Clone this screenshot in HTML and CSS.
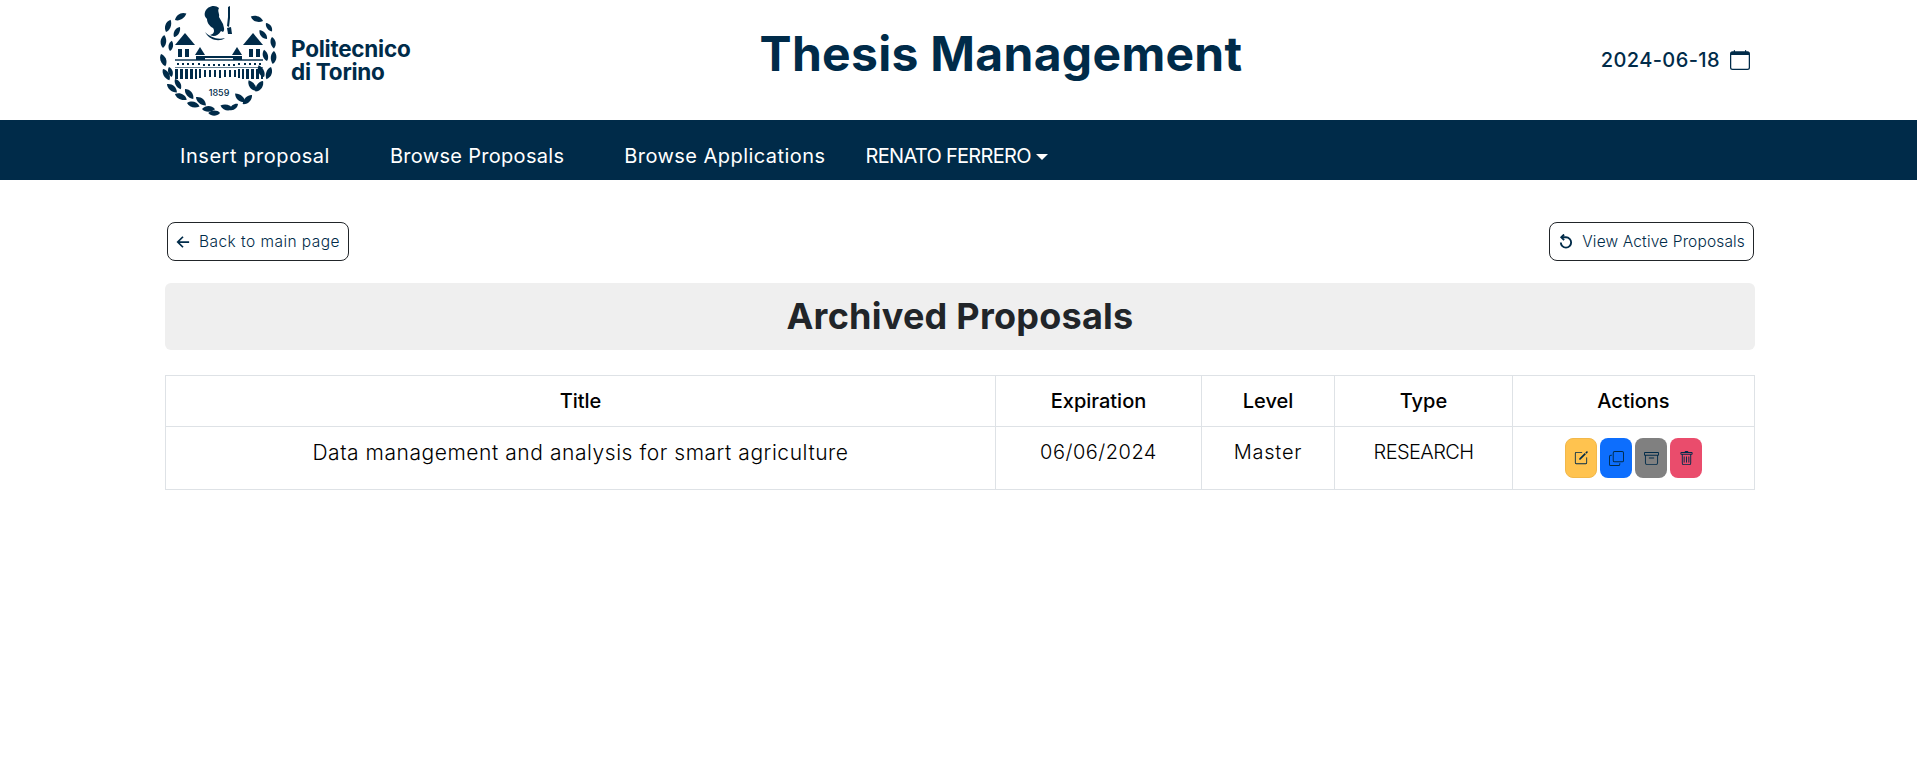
FILE: index.html
```html
<!DOCTYPE html>
<html lang="en">
<head>
    <meta charset="UTF-8">
    <meta name="viewport" content="width=device-width, initial-scale=1">
    <title>Thesis Management</title>
    <link rel="stylesheet" href="styles.css">
</head>
<body>

<header class="top">
    <div class="logo">
        <svg class="crest" width="118" height="116" viewBox="0 0 118 116" fill="#002b49">
            <defs>
                <path id="leaf" d="M0 0C3-4 9-5 13-1C9 3 3 3 0 0Z"/>
            </defs>
            <!-- laurel, left side -->
            <use href="#leaf" transform="translate(15 19) rotate(-25)"/>
            <use href="#leaf" transform="translate(6 31) rotate(-65)"/>
            <use href="#leaf" transform="translate(14 36) rotate(-55) scale(.9)"/>
            <use href="#leaf" transform="translate(3 47) rotate(-80)"/>
            <use href="#leaf" transform="translate(10 50) rotate(-75) scale(.8)"/>
            <use href="#leaf" transform="translate(1 53) rotate(75)"/>
            <use href="#leaf" transform="translate(3 68) rotate(65)"/>
            <use href="#leaf" transform="translate(9 66) rotate(80) scale(.8)"/>
            <use href="#leaf" transform="translate(7 83) rotate(45)"/>
            <use href="#leaf" transform="translate(15 78) rotate(65) scale(.9)"/>
            <use href="#leaf" transform="translate(15 93) rotate(30)"/>
            <use href="#leaf" transform="translate(25 88) rotate(55)"/>
            <use href="#leaf" transform="translate(27 102) rotate(20)"/>
            <use href="#leaf" transform="translate(36 96) rotate(45)"/>
            <use href="#leaf" transform="translate(42 108) rotate(5)"/>
            <!-- laurel, right side -->
            <use href="#leaf" transform="translate(103 20) rotate(205)"/>
            <use href="#leaf" transform="translate(106 22) rotate(60) scale(.8)"/>
            <use href="#leaf" transform="translate(107 38) rotate(235) scale(.9)"/>
            <use href="#leaf" transform="translate(112 36) rotate(85) scale(.9)"/>
            <use href="#leaf" transform="translate(107 60) rotate(260) scale(.9)"/>
            <use href="#leaf" transform="translate(114 50) rotate(100)"/>
            <use href="#leaf" transform="translate(104 76) rotate(250)"/>
            <use href="#leaf" transform="translate(111 66) rotate(115)"/>
            <use href="#leaf" transform="translate(96 90) rotate(240)"/>
            <use href="#leaf" transform="translate(103 80) rotate(130)"/>
            <use href="#leaf" transform="translate(85 101) rotate(225)"/>
            <use href="#leaf" transform="translate(92 94) rotate(140)"/>
            <use href="#leaf" transform="translate(73 108) rotate(200)"/>
            <use href="#leaf" transform="translate(78 103) rotate(150) scale(.8)"/>
            <use href="#leaf" transform="translate(60 112) rotate(185) scale(.9)"/>
            <!-- head -->
            <path d="M45 11C47 5 55 3 59 7C57 10 60 13 59 16L63 23C64 27 65 29 63 31L61 30C58 35 54 36 50 34C54 33 55 30 53 27C49 25 47 21 47 18C45 16 44 14 45 11Z"/>
            <path d="M45 31C50 36 57 39 65 37C60 41 50 40 45 31Z"/>
            <path d="M68 6L70 5L70 17L69 26L67 25L68 16Z"/>
            <path d="M67 27L71 26L72 33L68 33Z"/>
            <!-- building -->
            <path d="M25 32L35 44H15Z"/>
            <path d="M93 32L103 44H83Z"/>
            <path d="M40 46L45 54H35Z"/>
            <path d="M77 46L82 54H72Z"/>
            <path d="M18 48h4v8h-4zM25 48h4v8h-4zM89 48h4v8h-4zM96 48h4v8h-4z"/>
            <path d="M36 55h9v4h-9zM73 55h9v4h-9z"/>
            <path d="M45 55H73V57H45Z"/>
            <path d="M15 58H103V60H15Z" opacity=".7"/>
            <path d="M17 62h2v2h-2zM22 62h2v2h-2zM27 62h2v2h-2zM32 62h2v2h-2zM38 62h2v2h-2zM43 63h2v2h-2zM48 63h2v2h-2zM53 63h2v2h-2zM58 63h2v2h-2zM63 63h2v2h-2zM68 63h2v2h-2zM73 63h2v2h-2zM78 62h2v2h-2zM84 62h2v2h-2zM89 62h2v2h-2zM94 62h2v2h-2zM99 62h2v2h-2z"/>
            <path d="M15 66H103V67H15Z" opacity=".6"/>
            <path d="M15 68h3v10h-3zM20 68h3v10h-3zM25 68h3v10h-3zM30 68h3v10h-3zM35 68h2v10h-2zM39 68h2v9h-2zM44 69h2v7h-2zM49 69h2v7h-2zM54 69h2v7h-2zM59 69h2v8h-2zM64 69h2v7h-2zM69 69h2v7h-2zM74 69h2v7h-2zM78 68h2v9h-2zM82 68h2v10h-2zM86 68h3v10h-3zM91 68h3v10h-3zM96 68h3v10h-3zM101 68h2v10h-2z"/>
            <text class="crest-year" x="59" y="95" text-anchor="middle">1859</text>
        </svg>
        <div class="wordmark">Politecnico<br>di Torino</div>
    </div>
    <h1 class="app-title">Thesis Management</h1>
    <div class="today">
        <span>2024-06-18</span>
        <svg width="20" height="20" viewBox="0 0 16 16" fill="#002b49">
            <path d="M3.500 0a.5.5 0 0 1 .5.500V1h8V.5a.5.5 0 0 1 1 0V1h1a2 2 0 0 1 2 2v11a2 2 0 0 1-2 2H2a2 2 0 0 1-2-2V3a2 2 0 0 1 2-2h1V.5a.5.5 0 0 1 .5-.5zM1 4v10a1 1 0 0 0 1 1h12a1 1 0 0 0 1-1V4H1z"/>
        </svg>
    </div>
</header>

<nav class="navbar">
    <a class="nav-link nav-first" href="#">Insert proposal</a>
    <a class="nav-link nav-second" href="#">Browse Proposals</a>
    <a class="nav-link" href="#">Browse Applications</a>
    <a class="nav-user" href="#">RENATO FERRERO<span class="caret"></span></a>
</nav>

<main class="content">
    <div class="actions-row">
        <a class="outline-btn back-btn" href="#">
            <svg width="14" height="14" viewBox="0 0 16 16" fill="none" stroke="#002b49" stroke-width="2">
                <path d="M15 8H2M8 2L2 8l6 6"/>
            </svg>
            <span>Back to main page</span>
        </a>
        <a class="outline-btn view-btn" href="#">
            <svg width="15" height="15" viewBox="0 0 16 16" fill="none" stroke="#002b49" stroke-width="2">
                <path d="M4 3.500H8.500A5.500 5.500 0 1 1 3 9"/>
                <path d="M6.500 .5L3.500 3.500l3 3"/>
            </svg>
            <span>View Active Proposals</span>
        </a>
    </div>

    <h2 class="page-title">Archived Proposals</h2>

    <table class="proposals">
        <thead>
            <tr>
                <th class="col-title">Title</th>
                <th class="col-exp">Expiration</th>
                <th class="col-level">Level</th>
                <th class="col-type">Type</th>
                <th>Actions</th>
            </tr>
        </thead>
        <tbody>
            <tr>
                <td class="cell-title">Data management and analysis for smart agriculture</td>
                <td class="cell-date">06/06/2024</td>
                <td class="cell-level">Master</td>
                <td class="cell-type">RESEARCH</td>
                <td class="row-actions">
                    <div class="icon-btns">
                        <button class="icon-btn yellow">
                            <svg width="14" height="14" viewBox="0 0 16 16" fill="#002b49">
                                <path d="M15.500.6a1 1 0 0 0-1.400 0L13 1.700 14.300 3l1.100-1.100a1 1 0 0 0 .1-1.300zM13.600 3.700 12.300 2.400 6 8.700V10h1.300z"/>
                                <path d="M1 13.500A1.500 1.500 0 0 0 2.500 15h11a1.500 1.500 0 0 0 1.500-1.500v-6a.5.5 0 0 0-1 0v6a.5.5 0 0 1-.5.500h-11a.5.5 0 0 1-.5-.5v-11a.5.5 0 0 1 .5-.5H9a.5.5 0 0 0 0-1H2.500A1.500 1.500 0 0 0 1 2.500v11z"/>
                            </svg>
                        </button>
                        <button class="icon-btn blue">
                            <svg width="15" height="15" viewBox="0 0 16 16" fill="#002b49">
                                <path fill-rule="evenodd" d="M4 2a2 2 0 0 1 2-2h8a2 2 0 0 1 2 2v8a2 2 0 0 1-2 2H6a2 2 0 0 1-2-2V2zm2-1a1 1 0 0 0-1 1v8a1 1 0 0 0 1 1h8a1 1 0 0 0 1-1V2a1 1 0 0 0-1-1H6z"/>
                                <path d="M2 5a1 1 0 0 0-1 1v8a1 1 0 0 0 1 1h8a1 1 0 0 0 1-1v-1h1v1a2 2 0 0 1-2 2H2a2 2 0 0 1-2-2V6a2 2 0 0 1 2-2h1v1H2z"/>
                            </svg>
                        </button>
                        <button class="icon-btn gray">
                            <svg width="15" height="15" viewBox="0 0 16 16" fill="#002b49">
                                <path d="M0 2a1 1 0 0 1 1-1h14a1 1 0 0 1 1 1v2a1 1 0 0 1-1 1v7.500a2.500 2.500 0 0 1-2.500 2.500h-9A2.500 2.500 0 0 1 1 12.500V5a1 1 0 0 1-1-1V2zm2 3v7.500A1.500 1.500 0 0 0 3.500 14h9a1.500 1.500 0 0 0 1.500-1.500V5H2zm13-3H1v2h14V2zM5 7.500a.5.5 0 0 1 .5-.5h5a.5.5 0 0 1 0 1h-5a.5.5 0 0 1-.5-.5z"/>
                            </svg>
                        </button>
                        <button class="icon-btn red">
                            <svg width="15" height="15" viewBox="0 0 16 16" fill="#002b49">
                                <path d="M5.500 5.500A.5.5 0 0 1 6 6v6a.5.5 0 0 1-1 0V6a.5.5 0 0 1 .5-.5zm2.500 0a.5.5 0 0 1 .5.500v6a.5.5 0 0 1-1 0V6a.5.5 0 0 1 .5-.5zm3 .5a.5.5 0 0 0-1 0v6a.5.5 0 0 0 1 0V6z"/>
                                <path fill-rule="evenodd" d="M14.500 3a1 1 0 0 1-1 1H13v9a2 2 0 0 1-2 2H5a2 2 0 0 1-2-2V4h-.5a1 1 0 0 1-1-1V2a1 1 0 0 1 1-1H6a1 1 0 0 1 1-1h2a1 1 0 0 1 1 1h3.500a1 1 0 0 1 1 1v1zM4 4v9a1 1 0 0 0 1 1h6a1 1 0 0 0 1-1V4H4zM2.500 3V2h11v1h-11z"/>
                            </svg>
                        </button>
                    </div>
                </td>
            </tr>
        </tbody>
    </table>
</main>

</body>
</html>
```

FILE: styles.css
```css
* {
    box-sizing: border-box;
}

body {
    margin: 0;
    background-color: #fff;
    font-family: "Inter", "Open Sans", sans-serif;
    color: #000;
}

a {
    text-decoration: none;
}

.top {
    height: 120px;
    padding: 0 167px 0 160px;
    display: grid;
    grid-template-columns: 1fr auto 1fr;
    align-items: center;
}

.logo {
    display: flex;
    align-items: center;
    height: 120px;
}

.crest {
    flex: none;
    margin-top: -3px;
}

.crest-year {
    font-family: "Inter", sans-serif;
    font-size: 9px;
    font-weight: 500;
}

.wordmark {
    margin: 0 0 0 13px;
    font-size: 22.500px;
    line-height: 23px;
    font-weight: 700;
    letter-spacing: -0.25px;
    color: #002b49;
}

.app-title {
    margin: 0 0 13px 92px;
    font-size: 48px;
    font-weight: 700;
    letter-spacing: 0.3px;
    color: #002b49;
}

.today {
    justify-self: end;
    display: flex;
    align-items: center;
    gap: 10px;
    font-size: 20px;
    font-weight: 500;
    letter-spacing: 0.4px;
    color: #002b49;
}

.navbar {
    height: 60px;
    padding: 11px 0 0 180px;
    display: flex;
    align-items: center;
    background-color: #002b49;
}

.nav-link {
    margin-right: 60px;
    font-size: 20px;
    letter-spacing: 0.45px;
    color: #fff;
}

.nav-first {
    letter-spacing: 0.55px;
}

.nav-second {
    letter-spacing: 0.3px;
}

.nav-user {
    margin-left: -20px;
    font-size: 20px;
    letter-spacing: -0.7px;
    color: #fff;
}

.caret {
    display: inline-block;
    margin-left: 5px;
    vertical-align: 3px;
    border-top: 6px solid #fff;
    border-left: 6px solid transparent;
    border-right: 6px solid transparent;
}

.content {
    padding: 42px 162px 0 165px;
}

.actions-row {
    display: flex;
    justify-content: space-between;
    padding: 0 1px 0 2px;
}

.outline-btn {
    height: 39px;
    padding: 0 8px;
    display: flex;
    align-items: center;
    gap: 9px;
    border: 1px solid #212529;
    border-radius: 8px;
    font-size: 15.500px;
    font-weight: 300;
    color: #002b49;
}

.back-btn {
    letter-spacing: 0.45px;
}

.view-btn {
    letter-spacing: 0.15px;
}

.page-title {
    height: 67px;
    margin: 22px 0 25px;
    padding-bottom: 2px;
    display: flex;
    align-items: center;
    justify-content: center;
    background-color: #efefef;
    border-radius: 6px;
    font-size: 36px;
    font-weight: 700;
    letter-spacing: 0.25px;
    color: #212529;
}

.proposals {
    width: 100%;
    border-collapse: collapse;
    table-layout: fixed;
}

.proposals th,
.proposals td {
    border: 1px solid #dee2e6;
    text-align: center;
}

.proposals th {
    height: 51px;
    font-size: 20px;
    font-weight: 500;
}

.proposals td {
    height: 63px;
    padding: 0 0 12px;
    font-size: 20px;
    font-weight: 300;
    color: #000;
}

.col-title {
    width: 830px;
}

.col-exp {
    width: 206px;
}

.col-level {
    width: 133px;
}

.col-type {
    width: 178px;
}

.proposals .cell-title {
    font-size: 21px;
    letter-spacing: 0.55px;
}

.cell-date {
    letter-spacing: 0.5px;
}

.cell-level {
    letter-spacing: 0.8px;
}

.cell-type {
    letter-spacing: -0.6px;
}

.proposals .row-actions {
    padding: 0;
}

.icon-btns {
    display: flex;
    justify-content: center;
    gap: 3px;
}

.icon-btn {
    width: 32px;
    height: 40px;
    padding: 0;
    display: flex;
    align-items: center;
    justify-content: center;
    border: 1px solid transparent;
    border-radius: 8px;
}

.yellow {
    background-color: #ffc34f;
    border-color: #f2b84a;
}

.blue {
    background-color: #0d6efd;
}

.gray {
    background-color: #808080;
}

.red {
    background-color: #ea4c6c;
}
```
